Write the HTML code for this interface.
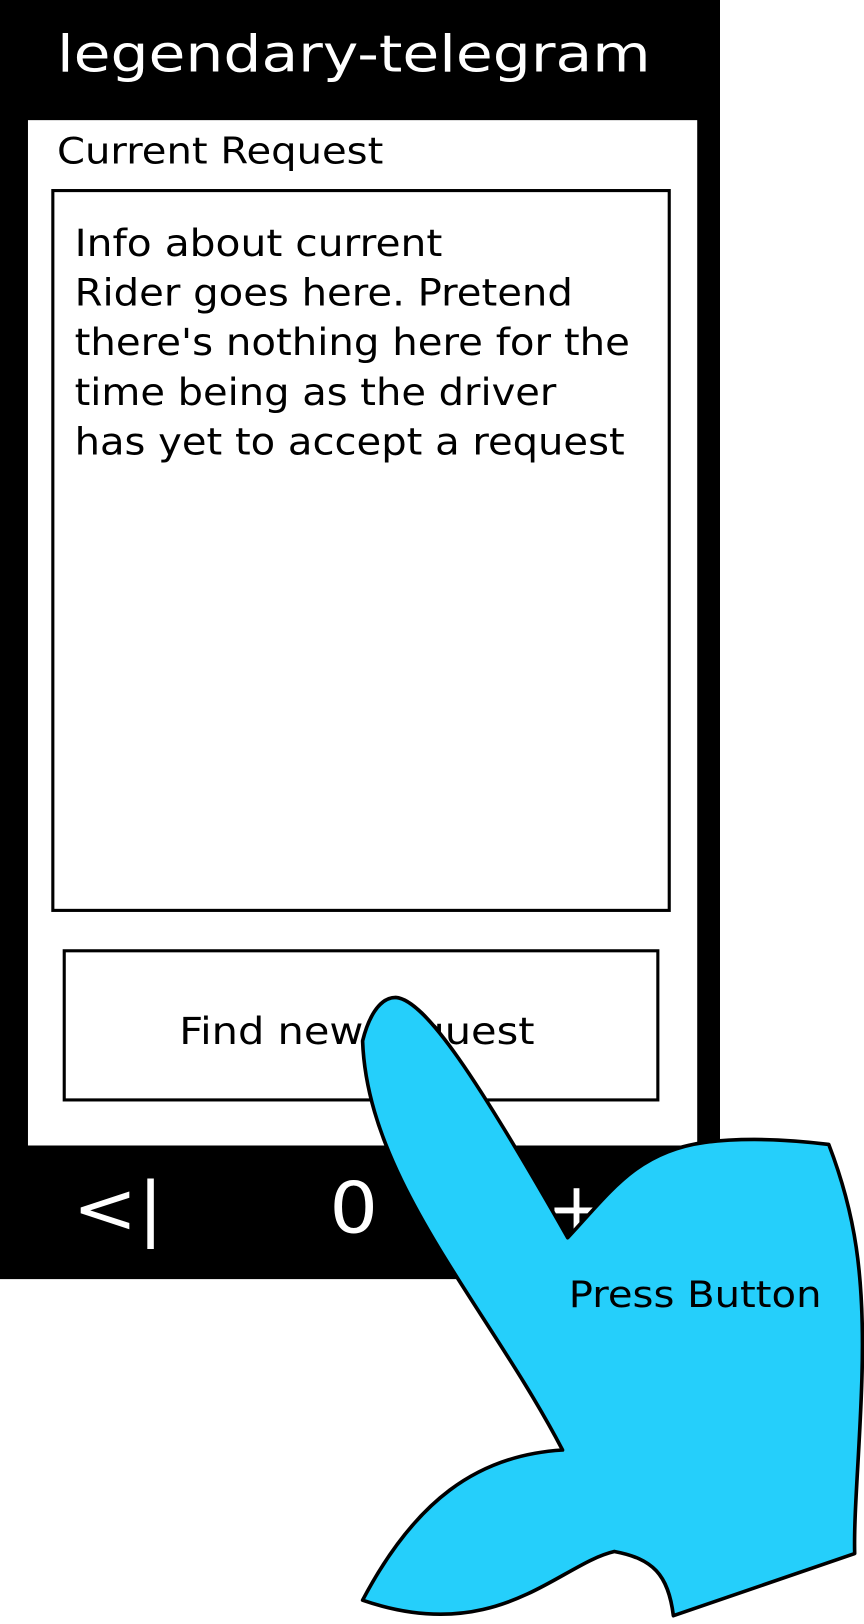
<!DOCTYPE html>
<html><head><meta charset="utf-8"><style>
html,body{margin:0;padding:0;background:#fff;width:864px;height:1624px;overflow:hidden}
svg{display:block}
text{font-family:"DejaVu Sans","Liberation Sans",sans-serif}
</style></head><body>
<svg width="864" height="1624" viewBox="0 0 834 1568" preserveAspectRatio="none">
<rect x="0" y="0" width="695" height="1235" fill="#000"/>
<text x="55" y="69" fill="#fff" font-size="49" textLength="573" lengthAdjust="spacingAndGlyphs">legendary-telegram</text>
<rect x="27" y="116" width="646" height="990" fill="#fff"/>
<text x="55" y="158" font-size="35" textLength="315" lengthAdjust="spacingAndGlyphs">Current Request</text>
<rect x="51" y="184" width="595" height="695" fill="#fff" stroke="#000" stroke-width="3"/>
<g font-size="36">
<text x="72" y="247" textLength="355" lengthAdjust="spacingAndGlyphs">Info about current</text>
<text x="72" y="295" textLength="481" lengthAdjust="spacingAndGlyphs">Rider goes here. Pretend</text>
<text x="72" y="343" textLength="536" lengthAdjust="spacingAndGlyphs">there's nothing here for the</text>
<text x="72" y="391" textLength="465" lengthAdjust="spacingAndGlyphs">time being as the driver</text>
<text x="72" y="439" textLength="531" lengthAdjust="spacingAndGlyphs">has yet to accept a request</text>
</g>
<rect x="62" y="918" width="573" height="144" fill="#fff" stroke="#000" stroke-width="3"/>
<text x="173" y="1008" font-size="36" textLength="343" lengthAdjust="spacingAndGlyphs">Find new request</text>
<g fill="#fff" font-size="68">
<text x="70" y="1190" textLength="88" lengthAdjust="spacingAndGlyphs">&lt;|</text>
<text x="318" y="1190" textLength="47" lengthAdjust="spacingAndGlyphs">0</text>
<text x="528" y="1190">+</text>
</g>
<path d="M350,1005 C355,985 365,963 382,963 C410,965 460,1040 548,1195 C590,1150 615,1112 680,1103 C720,1098 760,1100 800,1105 C825,1170 835,1230 832,1330 C830,1400 824,1460 825,1500 L650,1560 C645,1520 630,1505 593,1498 C540,1510 480,1590 350,1545 C400,1450 460,1405 543,1400 C470,1260 355,1140 350,1005 Z" fill="#25cffb" stroke="#000" stroke-width="3.5" stroke-linejoin="round"/>
<text x="549" y="1262" font-size="35" textLength="244" lengthAdjust="spacingAndGlyphs">Press Button</text>
</svg>
</body></html>
